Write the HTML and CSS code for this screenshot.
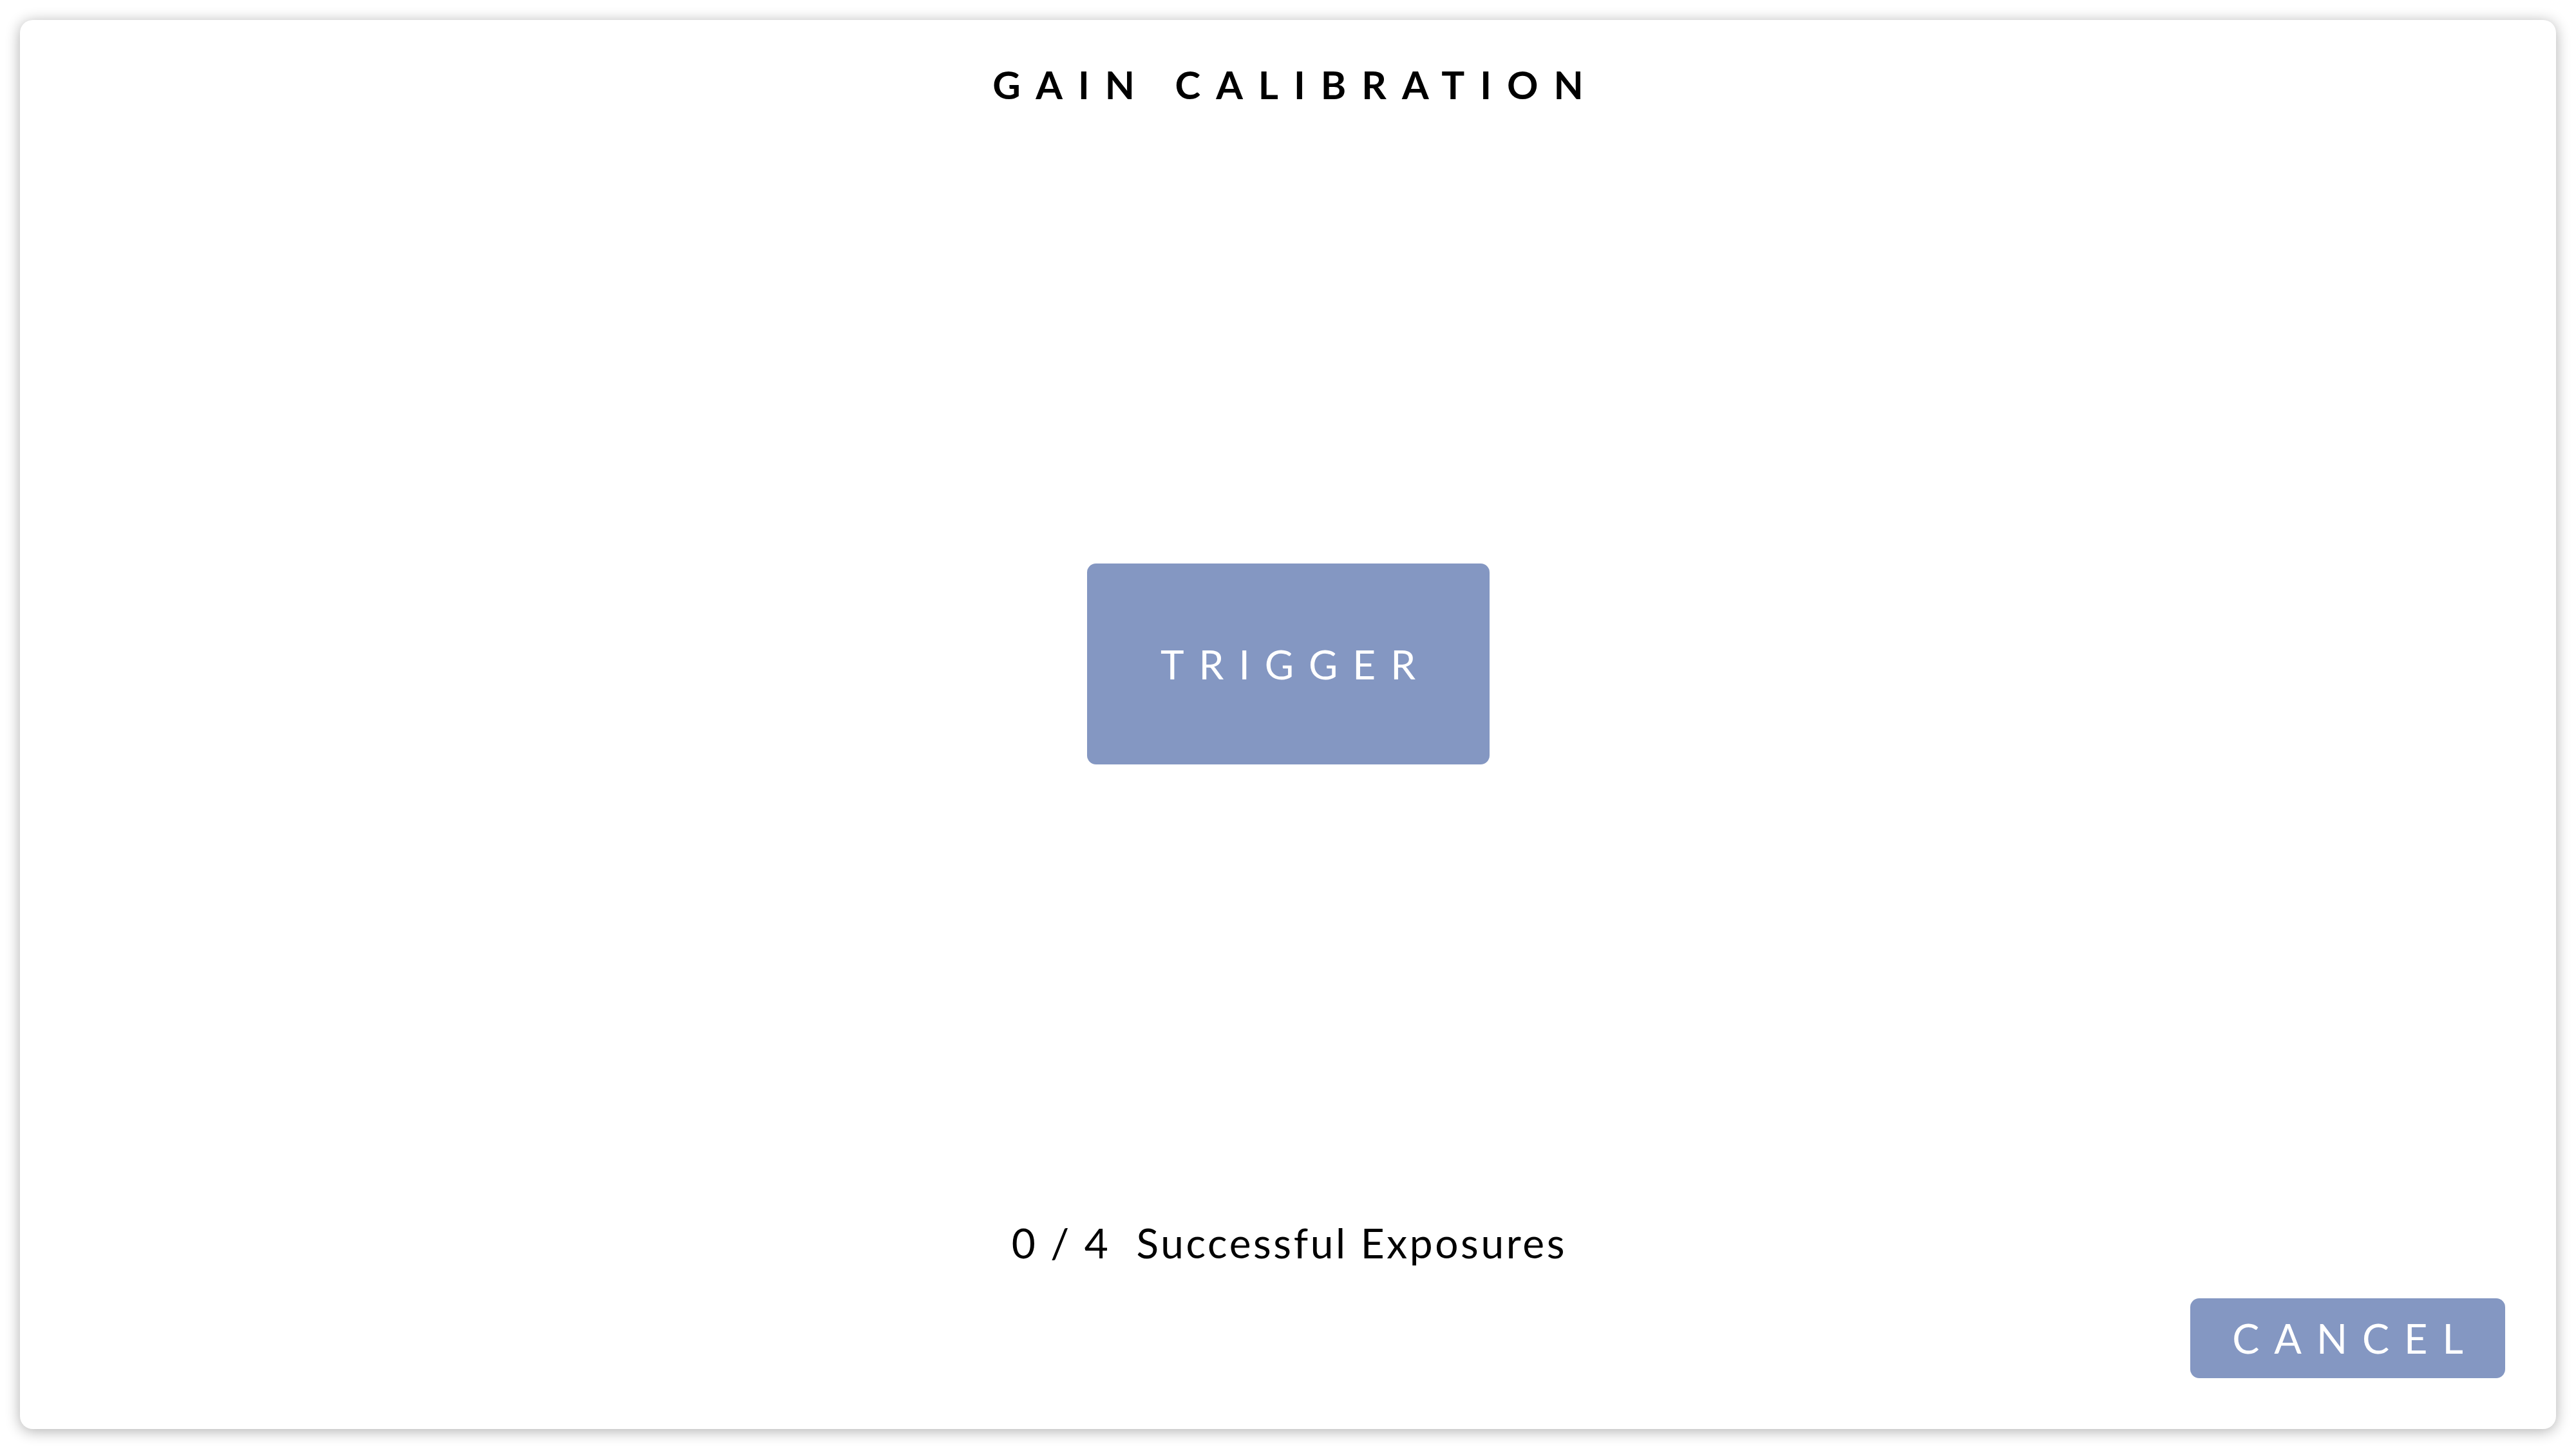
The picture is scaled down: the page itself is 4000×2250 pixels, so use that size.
FILE: index.html
```html
<!DOCTYPE html>
<html lang="en">
<head>
<meta charset="utf-8">
<title>Gain Calibration</title>
<link rel="stylesheet" href="styles.css">
</head>
<body>
  <main class="card">
    <h1 class="title">GAIN CALIBRATION</h1>
    <div class="center">
      <button class="btn btn-trigger" type="button">TRIGGER</button>
    </div>
    <p class="status">0 / 4&nbsp;&nbsp;Successful Exposures</p>
    <div class="footer">
      <button class="btn btn-cancel" type="button">CANCEL</button>
    </div>
  </main>
</body>
</html>
```

FILE: styles.css
```css
html, body {
  margin: 0;
  padding: 0;
  background: #ffffff;
}

body {
  padding: 31px;
  font-family: "Lato", "Liberation Sans", sans-serif;
  color: #000000;
}

.card {
  box-sizing: border-box;
  width: 3938px;
  height: 2188px;
  background: #ffffff;
  border-radius: 20px;
  box-shadow: 0 3px 22px rgba(0, 0, 0, 0.32);
  display: flex;
  flex-direction: column;
  padding: 0 79px 79px;
}

.title {
  margin: 64px 0 0;
  font-size: 60px;
  line-height: 1.2;
  font-weight: 700;
  letter-spacing: 24px;
  padding-left: 24px;
  text-align: center;
}

.center {
  margin-top: 708px;
  display: flex;
  justify-content: center;
}

.btn {
  border: none;
  margin: 0;
  background: #8497c2;
  color: #ffffff;
  font-family: "Lato", "Liberation Sans", sans-serif;
  font-weight: 400;
  line-height: 1.2;
  display: flex;
  align-items: center;
  justify-content: center;
  border-radius: 14px;
  cursor: pointer;
}

.btn-trigger {
  width: 625px;
  height: 312px;
  font-size: 62px;
  letter-spacing: 23px;
  padding: 0 0 0 23px;
}

.status {
  margin: 705px 0 0;
  font-size: 64px;
  line-height: 1.2;
  font-weight: 400;
  letter-spacing: 3.6px;
  padding-left: 3.6px;
  text-align: center;
}

.footer {
  margin-top: 47px;
  display: flex;
  justify-content: flex-end;
}

.btn-cancel {
  width: 489px;
  height: 124px;
  font-size: 63px;
  letter-spacing: 23px;
  padding: 0 0 0 23px;
}
```
